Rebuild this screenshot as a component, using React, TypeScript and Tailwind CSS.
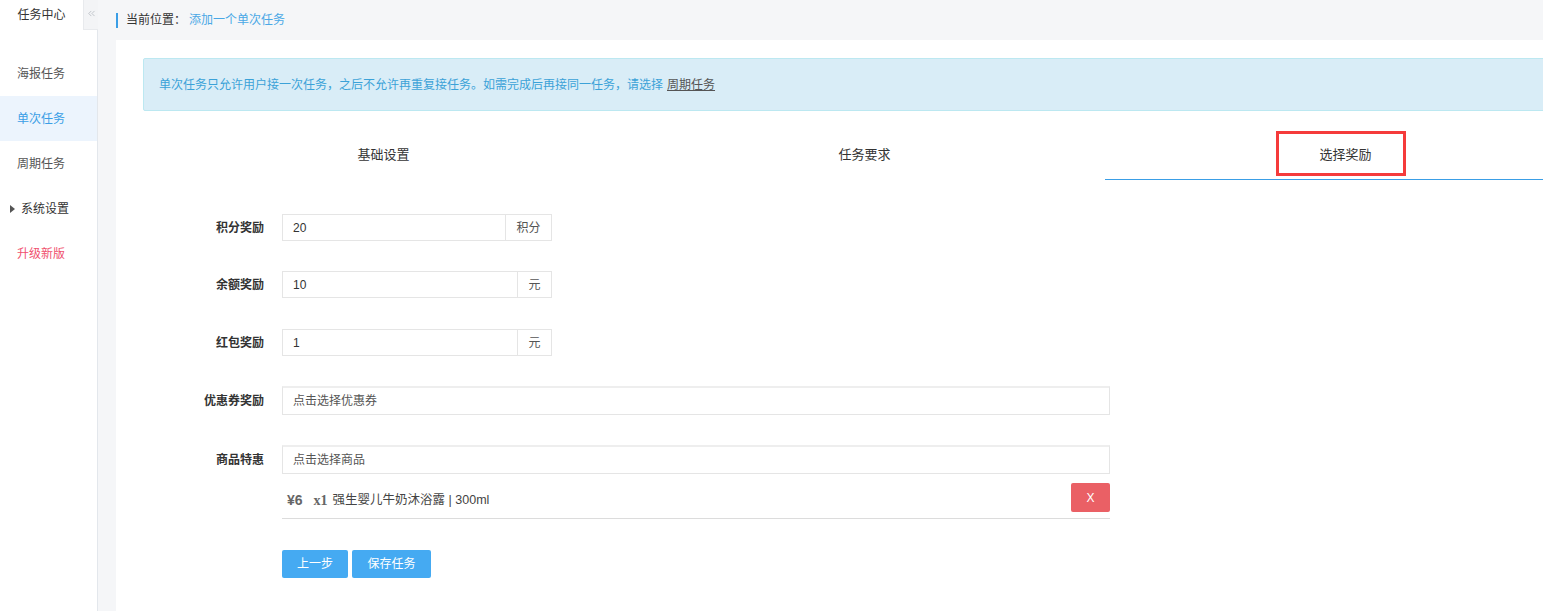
import { ChevronsLeft } from "lucide-react";

const font = { fontFamily: '"Liberation Sans", Arial, "Noto Sans CJK SC", sans-serif' };

const menu = [
  { label: "海报任务" },
  { label: "单次任务", active: true },
  { label: "周期任务" },
  { label: "系统设置", caret: true },
  { label: "升级新版", danger: true },
];

const UnitRow = ({ label, value, unit, unitW, gap }: { label: string; value: string; unit: string; unitW: string; gap: string }) => (
  <div className={`flex items-center h-[27px] ${gap}`}>
    <div className="w-[121px] text-right text-[12px] font-bold text-[#333]">{label}</div>
    <div className="ml-[18px] flex h-[27px] w-[270px] border border-[#e5e5e5]">
      <div className="flex-1 flex items-center px-[10px] text-[12px] text-[#333]">{value}</div>
      <div className={`${unitW} flex items-center justify-center border-l border-[#e5e5e5] text-[12px] text-[#555]`}>{unit}</div>
    </div>
  </div>
);

const App = () => {
  return (
    <div className="flex h-[611px] w-[1543px] overflow-hidden bg-[#f5f6f8]" style={font}>
      {/* Sidebar */}
      <aside className="w-[98px] shrink-0 flex flex-col">
        <div className="flex h-[30px]">
          <div className="w-[83px] bg-white flex items-center justify-center text-[12px] text-[#333]">任务中心</div>
          <div className="flex-1 bg-[#f3f4f6] border-l border-b border-[#e8eaed] flex items-start justify-center pt-[8px]">
            <ChevronsLeft className="h-[11px] w-[11px] text-[#aab0b8]" strokeWidth={1.5} />
          </div>
        </div>
        <div className="flex-1 bg-white border-r border-[#e3e7ec] pt-[21px]">
          {menu.map((m) => (
            <div
              key={m.label}
              className={`h-[45px] flex items-center text-[12px] ${m.active ? "bg-[#ecf4fd] text-[#3a9ee6]" : m.danger ? "text-[#f0506e]" : "text-[#555]"} ${m.caret ? "pl-[10px]" : "pl-[17px]"}`}
            >
              {m.caret && <span className="mr-[6px] inline-block w-0 h-0 border-y-[4px] border-y-transparent border-l-[5px] border-l-[#555]" />}
              <span className={m.caret ? "text-[#333]" : ""}>{m.label}</span>
            </div>
          ))}
        </div>
      </aside>

      {/* Main */}
      <main className="flex-1 min-w-0 flex flex-col">
        <div className="h-[40px] flex items-center pl-[18px] text-[12px]">
          <span className="w-[2px] h-[15px] bg-[#3a9ee6] mr-[8px]" />
          <span className="text-[#333]">当前位置：</span>
          <span className="text-[#4aa8e6] ml-[3px]">添加一个单次任务</span>
        </div>

        <div className="flex-1 ml-[18px] bg-white pl-[27px] pt-[18px]">
          <div className="w-[1460px]">
            <div className="h-[53px] flex items-center px-[15px] bg-[#d9edf7] border border-[#bce8f1] rounded-[2px] text-[12px] text-[#3ba2d8]">
              单次任务只允许用户接一次任务，之后不允许再重复接任务。如需完成后再接同一任务，请选择
              <span className="ml-[4px] text-[#555] underline">周期任务</span>
            </div>

            {/* Tabs */}
            <div className="flex mt-[19px] h-[50px]">
              <div className="w-[481px] flex items-center justify-center text-[13px] text-[#333]">基础设置</div>
              <div className="w-[481px] flex items-center justify-center text-[13px] text-[#333]">任务要求</div>
              <div className="w-[481px] flex items-center justify-center border-b border-[#3a9ee6]">
                <div className="w-[130px] h-[45px] mb-[3px] mr-[10px] border-[3px] border-[#f53b3b] flex items-center justify-center text-[13px] text-[#333] pt-[4px] pl-[10px]">
                  选择奖励
                </div>
              </div>
            </div>

            {/* Form */}
            <div className="mt-[34px]">
              <UnitRow label="积分奖励" value="20" unit="积分" unitW="w-[46px]" gap="mb-[30px]" />
              <UnitRow label="余额奖励" value="10" unit="元" unitW="w-[34px]" gap="mb-[31px]" />
              <UnitRow label="红包奖励" value="1" unit="元" unitW="w-[34px]" gap="mb-[30px]" />

              <div className="flex items-center h-[29px] mb-[30px]">
                <div className="w-[121px] text-right text-[12px] font-bold text-[#333]">优惠券奖励</div>
                <div className="ml-[18px] w-[828px] h-[29px] border border-[#e5e5e5] border-t-[2px] border-t-[#eeeeee] flex items-center px-[10px] text-[12px] text-[#555]">
                  点击选择优惠券
                </div>
              </div>

              <div className="flex">
                <div className="w-[121px] h-[29px] flex items-center justify-end text-[12px] font-bold text-[#333]">商品特惠</div>
                <div className="ml-[18px] w-[828px]">
                  <div className="h-[29px] border border-[#e5e5e5] border-t-[2px] border-t-[#eeeeee] flex items-center px-[10px] text-[12px] text-[#555]">
                    点击选择商品
                  </div>
                  <div className="mt-[9px] h-[36px] flex items-start justify-between border-b border-[#dcdcdc]">
                    <div className="flex items-center h-[35px] pl-[5px] text-[12px] text-[#555]">
                      <span className="font-bold text-[#666] text-[14px]">¥6</span>
                      <span className="ml-[11px] font-bold text-[#666] text-[14px]" style={{ fontFamily: '"Liberation Serif", serif' }}>x1</span>
                      <span className="ml-[5px] text-[#444] text-[12.5px]">强生婴儿牛奶沐浴露 | 300ml</span>
                    </div>
                    <button className="w-[39px] h-[29px] rounded-[2px] bg-[#ea6065] text-white text-[12px]">X</button>
                  </div>
                  <div className="mt-[31px] flex gap-[4px]">
                    <button className="w-[66px] h-[28px] rounded-[2px] bg-[#45aaf2] text-white text-[12px]">上一步</button>
                    <button className="w-[79px] h-[28px] rounded-[2px] bg-[#45aaf2] text-white text-[12px]">保存任务</button>
                  </div>
                </div>
              </div>
            </div>
          </div>
        </div>
      </main>
    </div>
  );
};

export default App;
